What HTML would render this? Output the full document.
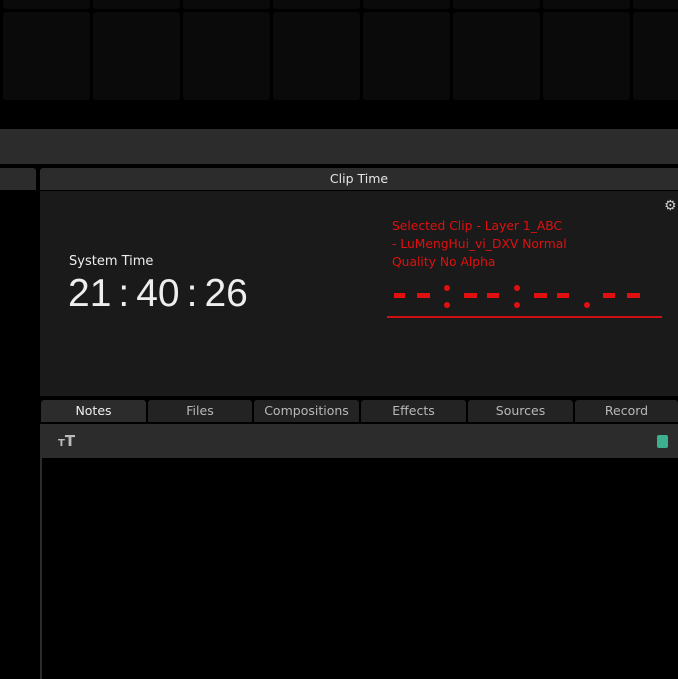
<!DOCTYPE html>
<html><head><meta charset="utf-8"><style>
*{margin:0;padding:0;box-sizing:border-box}
body{width:678px;height:679px;background:#000;overflow:hidden;position:relative;font-family:"DejaVu Sans","Liberation Sans",sans-serif;}
.a{position:absolute}
.tile{position:absolute;background:#0a0a0a;border-radius:3px}
.tab{position:absolute;top:400px;height:22px;background:#232323;color:#b8b8b8;font-size:12.5px;text-align:center;line-height:22px;border-radius:3px 3px 0 0}
.d{position:absolute;top:293px;height:5px;background:#e01010}
.p{position:absolute;width:6px;height:6px;border-radius:50%;background:#e01010}
</style></head><body>
<div id="tiles"></div>
<script>
var h='';for(var i=0;i<8;i++){var x=3+i*90;h+='<div class="tile" style="left:'+x+'px;top:-4px;width:87px;height:13px"></div><div class="tile" style="left:'+x+'px;top:12px;width:87px;height:88px"></div>';}
document.getElementById('tiles').innerHTML=h;
var d=[[394,11],[417,13],[464,13],[487,12],[534,13],[557,12],[603,12],[627,13]],s='';
d.forEach(function(v){s+='<div class="d" style="left:'+v[0]+'px;width:'+v[1]+'px"></div>';});
[[444,285],[444,302],[514,285],[514,302],[584,302]].forEach(function(v){s+='<div class="p" style="left:'+v[0]+'px;top:'+v[1]+'px"></div>';});
document.write(s);
</script>
<div class="a" style="left:0;top:129px;width:678px;height:35px;background:#2c2c2c"></div>
<div class="a" style="left:0;top:168px;width:36px;height:22px;background:#2c2c2c;border-radius:0 3px 0 0"></div>
<div class="a" style="left:40px;top:168px;width:638px;height:22px;background:#2c2c2c;border-radius:3px 0 0 0;color:#e6e6e6;font-size:12.5px;text-align:center;line-height:22px">Clip Time</div>
<div class="a" style="left:40px;top:191px;width:638px;height:205px;background:#1a1a1a;z-index:-1"></div>
<div class="a" style="left:69px;top:254px;color:#eee;font-size:13px">System Time</div>
<div class="a" style="left:68px;top:271px;color:#eee;font-size:39px;font-family:'Liberation Sans',sans-serif;line-height:46px">21<span style="margin:0 7px">:</span>40<span style="margin:0 7px">:</span>26</div>
<div class="a" style="left:392px;top:217px;color:#e01010;font-size:12.3px;line-height:18px">Selected Clip - Layer 1_ABC<br>- LuMengHui_vi_DXV Normal<br>Quality No Alpha</div>
<div class="a" style="left:387px;top:316px;width:275px;height:2px;background:#d01010"></div>
<div class="a" style="left:664px;top:199px;color:#ccc;font-size:14px;line-height:14px">⚙</div>
<div class="tab" style="left:41px;width:105px;background:#2c2c2c;color:#eee">Notes</div>
<div class="tab" style="left:148px;width:104px">Files</div>
<div class="tab" style="left:254px;width:105px">Compositions</div>
<div class="tab" style="left:361px;width:105px">Effects</div>
<div class="tab" style="left:468px;width:105px">Sources</div>
<div class="tab" style="left:575px;width:103px">Record</div>
<div class="a" style="left:40px;top:424px;width:638px;height:34px;background:#2c2c2c"></div>
<div class="a" style="left:58px;top:432px;color:#bbb;font-weight:bold;line-height:18px"><span style="font-size:10px">T</span><span style="font-size:15px">T</span></div>
<div class="a" style="left:657px;top:435px;width:11px;height:13px;background:#3cb08e;border-radius:2px"></div>
<div class="a" style="left:40px;top:458px;width:2px;height:221px;background:#2c2c2c"></div>
</body></html>
